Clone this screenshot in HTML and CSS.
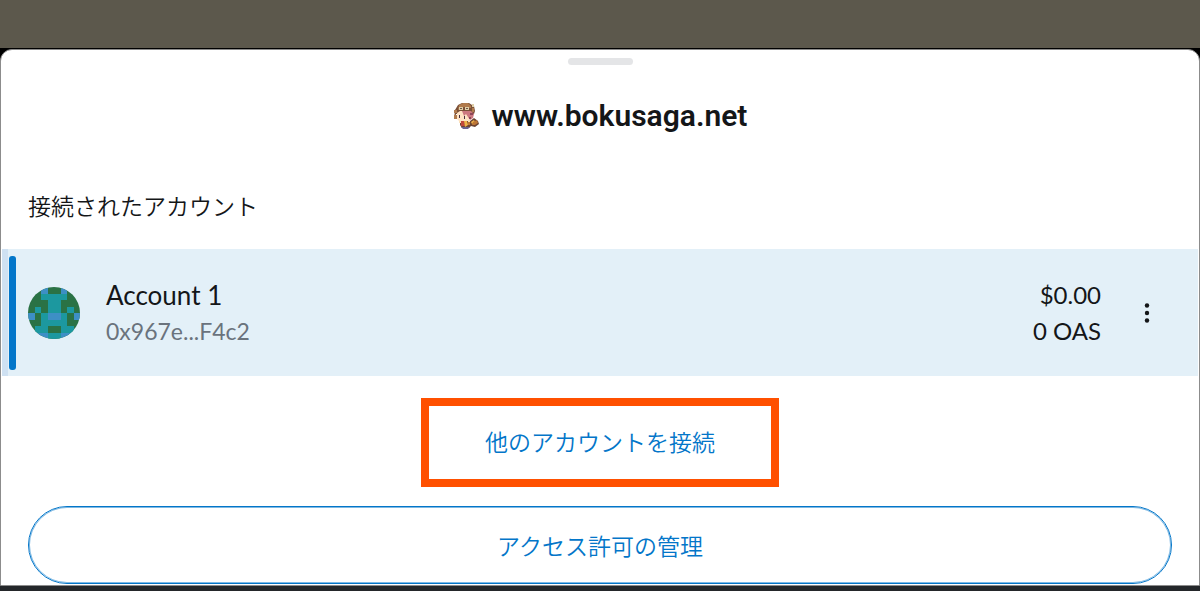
FILE: index.html
```html
<!DOCTYPE html>
<html lang="ja">
<head>
    <meta charset="UTF-8">
    <meta name="viewport" content="width=device-width, initial-scale=1.0">
    <title>www.bokusaga.net</title>
    <link rel="stylesheet" href="styles.css">
</head>
<body>
    <div class="backdrop"></div>
    <div class="sheet-wrap">
        <main class="sheet">
            <div class="handle"></div>
            <header class="site">
                <svg class="favicon" viewBox="0 0 26 28" aria-hidden="true">
                    <path fill="#7a5038" d="M5 3l4-2h7l3 2 2 1 1 5-1 3H3l-1 5H1l1-9z"/>
                    <path fill="#b07a4c" d="M6 3l4-2h5l3 3v2h-4l-3-1-4 2-2 1zM1 8h3v3H1zM1 13h3v4H1zM19 6h2v4h-2z"/>
                    <path fill="#e0cfa8" d="M6 5h4v3H6zM12 5h4v3h-4zM19 2h2v3h-2z"/>
                    <path fill="#6d5748" d="M7 6h2v1H7zM13 6h2v1h-2z"/>
                    <path fill="#ffe3c4" d="M4 11l3-2h6l3 4v5l-4 2H7l-3-3z"/>
                    <path fill="#cc7880" d="M9 9h9l3 3-1 4-3 2-2-3-2-3-2 2z"/>
                    <path fill="#8d4658" d="M17 11h3v2h-3zM16 15h2v2h-2z"/>
                    <path fill="#453040" d="M6 13h1v3H6zM11 14h1v3h-1z"/>
                    <path fill="#6b4433" d="M7 19h10l4-3 4 3 1 3-4 3-4-1-2 2H9l-2-3z"/>
                    <path fill="#c1483c" d="M8 19h3l1 5H8z"/>
                    <path fill="#f0b548" d="M11 19h3l1 4-3 2zM18 20l3-2 1 2-3 2z"/>
                    <path fill="#bd7636" d="M20 20l4-2 1 3-3 2h-3zM15 20h2v3h-2z"/>
                    <path fill="#fbe0b9" d="M6 19h2v2H6zM15 18h2v2h-2z"/>
                    <path fill="#69638f" d="M8 25h9l-2 2h-5z"/>
                </svg>
                <h1 class="site-name">www.bokusaga.net</h1>
            </header>
            <h2 class="section-title">接続されたアカウント</h2>
            <div class="account">
                <span class="selected-bar"></span>
                <svg class="avatar" viewBox="0 0 8 8" shape-rendering="crispEdges" aria-hidden="true">
                    <rect width="8" height="8" fill="#2a7245"/>
                    <path fill="#1c989f" d="M2 1h4v1H2zM3 2h2v2H3zM1 3h1v1H1zM6 3h1v1H6zM2 4h4v2H2zM1 6h2v1H1zM5 6h2v1H5zM3 7h2v1H3z"/>
                    <path fill="#3d8fc5" d="M2 0h1v1H2zM5 0h1v1H5zM0 4h1v1H0zM3 4h2v1H3zM7 4h1v1H7zM1 7h2v1H1zM5 7h2v1H5z"/>
                </svg>
                <div class="account-info">
                    <div class="account-name">Account 1</div>
                    <div class="account-address">0x967e...F4c2</div>
                </div>
                <div class="balance">
                    <div>$0.00</div>
                    <div>0 OAS</div>
                </div>
                <button class="more-btn" type="button" aria-label="メニュー">
                    <svg class="more-icon" viewBox="0 0 6 20" aria-hidden="true">
                        <circle cx="3" cy="2.5" r="2.2"/>
                        <circle cx="3" cy="10" r="2.2"/>
                        <circle cx="3" cy="17.5" r="2.2"/>
                    </svg>
                </button>
            </div>
            <div class="highlight">
                <button class="connect-btn" type="button">他のアカウントを接続</button>
            </div>
            <button class="manage-btn" type="button">アクセス許可の管理</button>
        </main>
    </div>
</body>
</html>
```

FILE: styles.css
```css
* {
    box-sizing: border-box;
}
body {
    display: flex;
    flex-direction: column;
    min-height: 100vh;
    margin: 0;
    background-color: #24272a;
    color: #141618;
    font-family: Lato, "Noto Sans CJK JP", sans-serif;
}
h1, h2 {
    margin: 0;
}
button {
    background: none;
    border: none;
    padding: 0;
    font-family: inherit;
    cursor: pointer;
}
.backdrop {
    height: 48px;
    background-color: #5c584c;
}
.sheet-wrap {
    background-color: #000;
    padding-top: 1px;
}
.sheet {
    display: flex;
    flex-direction: column;
    background-color: #fff;
    border: 1px solid #8c8c8c;
    border-radius: 12px 12px 0 0;
}
.handle {
    align-self: center;
    width: 65px;
    height: 7px;
    margin-top: 8px;
    border-radius: 4px;
    background-color: #e4e5e7;
}
.site {
    display: flex;
    align-items: center;
    justify-content: center;
    gap: 13px;
    height: 40px;
    margin-top: 31px;
}
.favicon {
    width: 26px;
    height: 28px;
}
.site-name {
    font-family: Roboto, sans-serif;
    font-size: 30px;
    font-weight: 600;
    line-height: 40px;
}
.section-title {
    margin: 52px 27px 25px;
    font-size: 23px;
    font-weight: 350;
    line-height: 36px;
}
.account {
    display: flex;
    align-items: center;
    height: 127px;
    margin: 0 1px;
    padding-right: 45px;
    border-left: 6px solid #cfe1f2;
    background-color: #e3f0f8;
}
.selected-bar {
    width: 7px;
    height: 114px;
    margin: 0 12px 0 1px;
    border-radius: 3px;
    background-color: #0376c9;
}
.avatar {
    width: 52px;
    height: 52px;
    border-radius: 50%;
}
.account-info {
    flex: 1;
    margin-left: 26px;
}
.account-name {
    font-size: 26px;
    line-height: 36px;
}
.account-address {
    color: #6a737d;
    font-size: 23px;
    line-height: 36px;
}
.balance {
    font-size: 24px;
    line-height: 36px;
    text-align: right;
}
.more-btn {
    display: flex;
    justify-content: center;
    width: 12px;
    margin-left: 40px;
}
.more-icon {
    width: 6px;
    height: 20px;
    fill: #141618;
}
.highlight {
    align-self: center;
    margin-top: 22px;
    border: 8px solid #ff5000;
}
.connect-btn {
    display: block;
    padding: 18px 56px 19px;
    color: #0376c9;
    font-size: 23px;
    font-weight: 350;
    line-height: 36px;
}
.manage-btn {
    height: 78px;
    margin: 19px 27px 1px;
    padding-top: 2px;
    border: 1px solid #0376c9;
    border-radius: 39px;
    box-shadow: inset 0 0 0 1px #7fb9e3;
    color: #0376c9;
    font-size: 23px;
    font-weight: 350;
    line-height: 36px;
}
```
